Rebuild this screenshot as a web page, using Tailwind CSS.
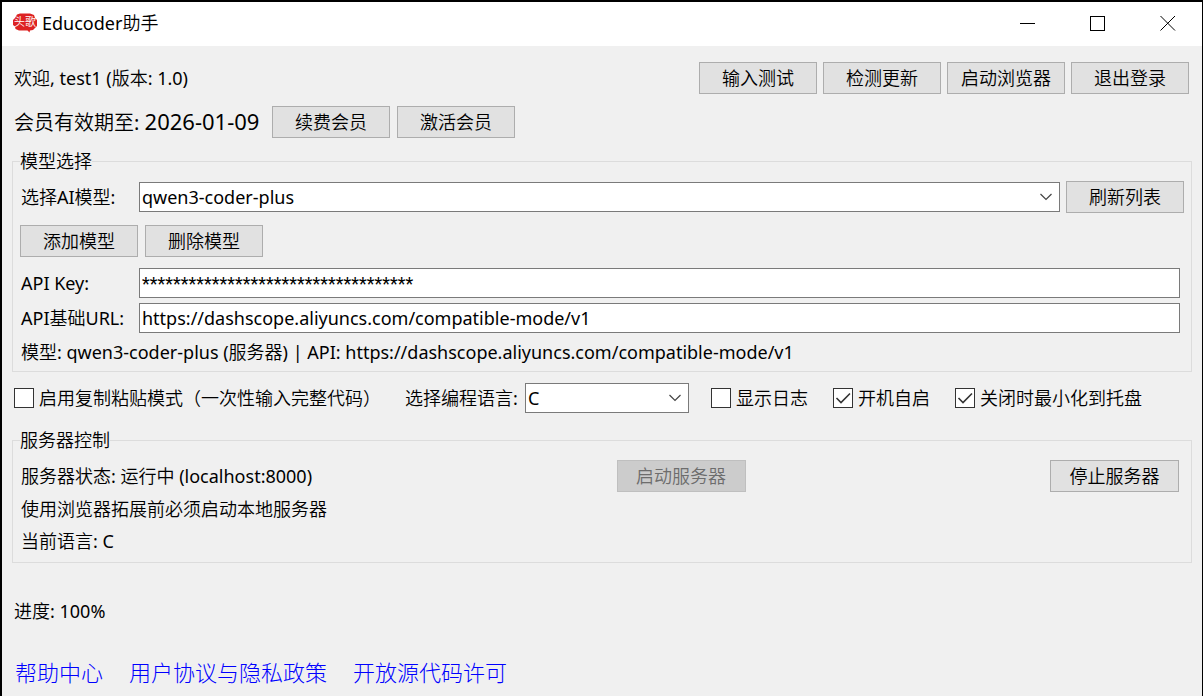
<!DOCTYPE html>
<html lang="zh-CN">
<head>
  <meta charset="UTF-8" />
  <meta name="viewport" content="width=device-width, initial-scale=1.0"/>
  <title>Educoder助手</title>
  <script src="https://cdn.jsdelivr.net/npm/@tailwindcss/browser@4"></script>
</head>
<body class="min-h-screen flex flex-col bg-[#f0f0f0] border-t-2 border-l-2 border-r border-black text-black text-[18px] leading-6 font-['Noto_Sans','Noto_Sans_CJK_SC_DemiLight','Noto_Sans_CJK_SC',sans-serif]">

  <!-- Title bar -->
  <header class="flex items-center h-11 pl-[11px] pr-[26px] pb-0.5 bg-white">
    <svg class="w-6 h-5 mr-[5px]" viewBox="0 0 24 20" aria-hidden="true">
      <path fill="#dd2222" d="M4 1.500 L7 0.500 H17 L21 2 L22 5 L24 7 V13 L22 15 L20 17 L17 17.500 L16.500 19.500 L14.500 17.500 H6 L2.500 16 L2 13.500 L0 12 V7 L2 5 Z"/>
      <text x="1" y="13" fill="#fff" font-size="11" font-weight="500">头歌</text>
    </svg>
    <h1 class="flex-1">Educoder助手</h1>
    <div class="flex items-center gap-[54px]">
      <button type="button" aria-label="最小化">
        <svg class="w-4 h-4" viewBox="0 0 16 16" fill="none" stroke="#000" shape-rendering="crispEdges"><path d="M0 8.500h15"/></svg>
      </button>
      <button type="button" aria-label="最大化">
        <svg class="w-4 h-4" viewBox="0 0 16 16" fill="none" stroke="#000" shape-rendering="crispEdges"><path d="M0.500 1.500h14v14h-14z"/></svg>
      </button>
      <button type="button" aria-label="关闭">
        <svg class="w-4 h-4" viewBox="0 0 16 16" fill="none" stroke="#000"><path d="M0.500 1l14.500 14.500M15 1l-14.500 14.500"/></svg>
      </button>
    </div>
  </header>

  <main class="flex flex-col px-[10px] pt-4">
    <!-- User info -->
    <div class="flex items-center pl-[2px] pr-[3px]">
      <p class="flex-1">欢迎, test1 (版本: 1.0)</p>
      <div class="flex gap-[6px]">
        <button type="button" class="w-[118px] h-8 bg-[#e1e1e1] border border-[#adadad]">输入测试</button>
        <button type="button" class="w-[118px] h-8 bg-[#e1e1e1] border border-[#adadad]">检测更新</button>
        <button type="button" class="w-[118px] h-8 bg-[#e1e1e1] border border-[#adadad]">启动浏览器</button>
        <button type="button" class="w-[118px] h-8 bg-[#e1e1e1] border border-[#adadad]">退出登录</button>
      </div>
    </div>

    <div class="flex items-center gap-[7px] mt-3 pl-[2px]">
      <p class="w-[251px] text-[20px] whitespace-nowrap">会员有效期至: <span class="text-[22px]">2026-01-09</span></p>
      <button type="button" class="w-[118px] h-8 bg-[#e1e1e1] border border-[#adadad]">续费会员</button>
      <button type="button" class="w-[118px] h-8 bg-[#e1e1e1] border border-[#adadad]">激活会员</button>
    </div>

    <!-- Model selection -->
    <fieldset class="mt-[11px] border border-[#dcdcdc] px-[7px] pb-[7px]">
      <legend>模型选择</legend>
      <div class="flex items-center gap-[6px] mt-2">
        <label for="model" class="w-[113px] pl-px">选择AI模型:</label>
        <div class="relative flex-1">
          <select id="model" class="block appearance-none w-full h-[30px] pl-[2px] bg-white border border-[#7a7a7a]">
            <option>qwen3-coder-plus</option>
          </select>
          <svg class="absolute right-2 top-[11px] w-3 h-2 pointer-events-none" viewBox="0 0 12 8" fill="none" stroke="#444" stroke-width="1.2"><path d="M0.500 1l5.500 5.500L11.500 1"/></svg>
        </div>
        <button type="button" class="w-[118px] h-8 bg-[#e1e1e1] border border-[#adadad]">刷新列表</button>
      </div>
      <div class="flex gap-[7px] mt-3">
        <button type="button" class="w-[118px] h-8 bg-[#e1e1e1] border border-[#adadad]">添加模型</button>
        <button type="button" class="w-[118px] h-8 bg-[#e1e1e1] border border-[#adadad]">删除模型</button>
      </div>
      <div class="flex items-center gap-[6px] mt-[11px] pr-1">
        <label for="key" class="w-[113px] pl-px">API Key:</label>
        <input id="key" type="text" value="***********************************" class="flex-1 h-[30px] px-[2px] bg-white border border-[#7a7a7a] font-['Roboto',sans-serif]">
      </div>
      <div class="flex items-center gap-[6px] mt-[5px] pr-1">
        <label for="url" class="w-[113px] pl-px whitespace-nowrap">API基础URL:</label>
        <input id="url" type="text" value="https://dashscope.aliyuncs.com/compatible-mode/v1" class="flex-1 h-[30px] px-[2px] bg-white border border-[#7a7a7a]">
      </div>
      <p class="mt-[7px] pl-px">模型: qwen3-coder-plus (服务器) | API: https://dashscope.aliyuncs.com/compatible-mode/v1</p>
    </fieldset>

    <!-- Options -->
    <div class="flex items-center mt-[11px] pl-[2px] whitespace-nowrap">
      <label class="flex items-center gap-[5px] w-[391px]">
        <input type="checkbox" class="appearance-none size-5 bg-white border border-[#333]">
        启用复制粘贴模式（一次性输入完整代码）
      </label>
      <label for="lang" class="w-[120px]">选择编程语言:</label>
      <div class="relative w-[164px] mr-[22px]">
        <select id="lang" class="block appearance-none w-full h-[30px] pl-[2px] bg-white border border-[#7a7a7a]">
          <option>C</option>
        </select>
        <svg class="absolute right-2 top-[11px] w-3 h-2 pointer-events-none" viewBox="0 0 12 8" fill="none" stroke="#444" stroke-width="1.2"><path d="M0.500 1l5.500 5.500L11.500 1"/></svg>
      </div>
      <label class="flex items-center gap-[5px] w-[122px]">
        <input type="checkbox" class="appearance-none size-5 bg-white border border-[#333]">
        显示日志
      </label>
      <label class="flex items-center gap-[5px] w-[122px]">
        <span class="relative">
          <input type="checkbox" checked class="block appearance-none size-5 bg-white border border-[#333]">
          <svg class="absolute inset-0 size-5 pointer-events-none" viewBox="0 0 20 20" fill="none" stroke="#333" stroke-width="1.6"><path d="M3.500 10l4.500 4.500L17 5.500"/></svg>
        </span>
        开机自启
      </label>
      <label class="flex items-center gap-[5px]">
        <span class="relative">
          <input type="checkbox" checked class="block appearance-none size-5 bg-white border border-[#333]">
          <svg class="absolute inset-0 size-5 pointer-events-none" viewBox="0 0 20 20" fill="none" stroke="#333" stroke-width="1.6"><path d="M3.500 10l4.500 4.500L17 5.500"/></svg>
        </span>
        关闭时最小化到托盘
      </label>
    </div>

    <!-- Server control -->
    <fieldset class="mt-[15px] border border-[#dcdcdc] pl-[7px] pr-3 pb-[9px]">
      <legend>服务器控制</legend>
      <div class="flex items-center justify-between mt-2">
        <p class="pl-px">服务器状态: 运行中 (localhost:8000)</p>
        <button type="button" disabled class="w-[129px] h-8 bg-[#cccccc] border border-[#bfbfbf] text-[#6d6d6d]">启动服务器</button>
        <button type="button" class="w-[129px] h-8 bg-[#e1e1e1] border border-[#adadad]">停止服务器</button>
      </div>
      <p class="mt-[5px] pl-px">使用浏览器拓展前必须启动本地服务器</p>
      <p class="mt-2 pl-px">当前语言: C</p>
    </fieldset>

    <p class="mt-9 pl-[2px]">进度: 100%</p>

    <nav class="flex gap-[26px] mt-8 pl-[3px] text-[22px] leading-8 text-[#0000ff] font-['Noto_Sans_CJK_SC',sans-serif] font-light">
      <a href="#">帮助中心</a>
      <a href="#">用户协议与隐私政策</a>
      <a href="#">开放源代码许可</a>
    </nav>
  </main>
</body>
</html>
